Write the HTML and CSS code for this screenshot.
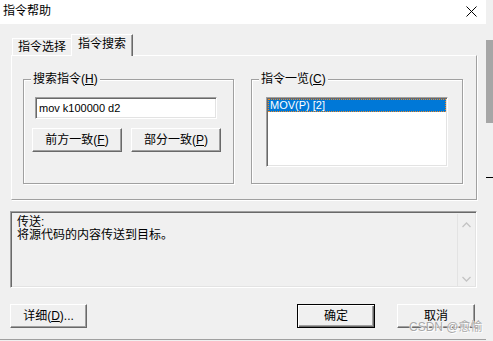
FILE: index.html
```html
<!DOCTYPE html>
<html lang="zh-CN">
<head>
    <meta charset="UTF-8">
    <title>指令帮助</title>
    <link rel="stylesheet" href="styles.css">
</head>
<body>
    <div class="dialog">
        <div class="titlebar">
            <span class="title">指令帮助</span>
            <svg class="close" width="11" height="11" viewBox="0 0 11 11">
                <path d="M0.5 0.5 L10.5 10.5 M10.5 0.5 L0.5 10.5" stroke="#000" stroke-width="1"/>
            </svg>
        </div>
        <div class="main">
            <div class="tabs">
                <div class="tab">指令选择</div>
                <div class="tab active">指令搜索</div>
            </div>
            <div class="panel">
                <div class="group group-search">
                    <span class="legend">搜索指令(<u>H</u>)</span>
                    <div class="edit">mov k100000 d2</div>
                    <div class="btn-row">
                        <button class="btn wide">前方一致(<u>F</u>)</button>
                        <button class="btn wide">部分一致(<u>P</u>)</button>
                    </div>
                </div>
                <div class="group group-list">
                    <span class="legend">指令一览(<u>C</u>)</span>
                    <div class="listbox">
                        <div class="item selected">MOV(P) [2]</div>
                    </div>
                </div>
            </div>
            <div class="desc">
                <div class="desc-text">传送:<br>将源代码的内容传送到目标。</div>
                <div class="vscroll">
                    <svg width="9" height="6" viewBox="0 0 9 6"><path d="M0.5 5 L4.5 1 L8.5 5" fill="none" stroke="#c4c4c4" stroke-width="1.3"/></svg>
                    <svg width="9" height="6" viewBox="0 0 9 6"><path d="M0.5 1 L4.5 5 L8.5 1" fill="none" stroke="#c4c4c4" stroke-width="1.3"/></svg>
                </div>
            </div>
            <div class="footer">
                <button class="btn detail">详细(<u>D</u>)...</button>
                <div class="footer-right">
                    <button class="btn ok">确定</button>
                    <button class="btn">取消</button>
                </div>
            </div>
        </div>
        <div class="watermark">CSDN @愈愉</div>
    </div>
    <div class="side">
        <div class="side-thumb"></div>
        <div class="side-rule"></div>
    </div>
</body>
</html>
```

FILE: styles.css
```css
body {
    margin: 0;
    display: flex;
    background: #f0f0f0;
    font-family: "Liberation Sans", "Noto Sans CJK SC", sans-serif;
    font-size: 12px;
    color: #000;
}
u {
    text-decoration: underline;
}
.dialog {
    width: 486px;
    height: 339px;
    background: #f0f0f0;
    border-bottom: 1px solid #a0a0a0;
    position: relative;
}
.titlebar {
    height: 24px;
    background: #fff;
    display: flex;
    justify-content: space-between;
    align-items: center;
    padding: 0 9px 0 3px;
}
.title {
    line-height: 22px;
    margin-top: -2px;
}
.close {
    margin-top: -1px;
}
.main {
    padding: 0 10px;
}
.tabs {
    display: flex;
    align-items: flex-end;
    margin-top: 11px;
    padding-left: 2px;
    height: 21px;
    margin-bottom: -1px;
    position: relative;
    z-index: 1;
}
.tab {
    width: 58px;
    height: 16px;
    line-height: 16px;
    text-align: center;
    border-top: 1px solid #fff;
    border-left: 1px solid #fff;
    margin-bottom: 1px;
}
.tab.active {
    width: 60px;
    height: 21px;
    line-height: 19px;
    margin-bottom: 0;
    background: #f0f0f0;
    border-right: 1px solid #696969;
    box-shadow: inset -1px 0 0 #a0a0a0;
}
.panel {
    margin-left: 1px;
    border-top: 1px solid #fff;
    border-left: 1px solid #fff;
    border-right: 1px solid #a0a0a0;
    border-bottom: 1px solid #a0a0a0;
    box-shadow: 1px 1px 0 #fff;
    padding: 23px 0 0 11px;
    display: flex;
    gap: 17px;
    box-sizing: border-box;
    width: 466px;
    height: 145px;
}
.group {
    position: relative;
    height: 105px;
    box-sizing: border-box;
    border: 1px solid #a0a0a0;
    box-shadow: inset 1px 1px 0 #fff, 1px 1px 0 #fff;
}
.group-search {
    width: 211px;
    padding: 17px 0 0 11px;
}
.group-list {
    width: 212px;
    padding: 17px 0 0 14px;
}
.legend {
    position: absolute;
    top: -8px;
    left: 7px;
    padding: 0 2px;
    background: #f0f0f0;
    line-height: 15px;
}
.edit {
    width: 182px;
    height: 22px;
    box-sizing: border-box;
    background: #fff;
    border: 1px solid;
    border-color: #a0a0a0 #fff #fff #a0a0a0;
    box-shadow: inset 1px 1px 0 #696969, inset -1px -1px 0 #e3e3e3;
    padding: 2px 0 0 3px;
    font-size: 11px;
    line-height: 16px;
}
.btn-row {
    display: flex;
    gap: 9px;
    margin: 9px 0 0 -3px;
}
.btn {
    font-family: inherit;
    font-size: 12px;
    height: 24px;
    width: 78px;
    padding: 0;
    background: #f0f0f0;
    color: #000;
    border: 1px solid;
    border-color: #fff #696969 #696969 #fff;
    box-shadow: inset -1px -1px 0 #a0a0a0;
    line-height: 20px;
}
.btn.wide {
    width: 90px;
}
.listbox {
    width: 182px;
    height: 70px;
    box-sizing: border-box;
    background: #fff;
    border: 1px solid;
    border-color: #a0a0a0 #fff #fff #a0a0a0;
    box-shadow: inset 1px 1px 0 #696969, inset -1px -1px 0 #e3e3e3;
    padding: 1px 1px 0 1px;
}
.item {
    height: 13px;
    line-height: 13px;
    font-size: 11px;
    padding-left: 2px;
}
.item.selected {
    background: #0078d7;
    color: #fff;
    outline: 1px dotted #f08a24;
    outline-offset: -1px;
}
.desc {
    margin-top: 11px;
    width: 467px;
    height: 77px;
    box-sizing: border-box;
    border: 1px solid;
    border-color: #a0a0a0 #fff #fff #a0a0a0;
    box-shadow: inset 1px 1px 0 #696969, inset -1px -1px 0 #e3e3e3;
    display: flex;
    justify-content: space-between;
}
.desc-text {
    padding: 4px 0 0 6px;
    line-height: 13px;
}
.vscroll {
    width: 17px;
    margin: 2px 1px 1px 0;
    border-left: 1px solid #e3e3e3;
    display: flex;
    flex-direction: column;
    justify-content: space-between;
    align-items: center;
    padding: 8px 0 4px;
}
.footer {
    margin-top: 16px;
    display: flex;
    justify-content: space-between;
    padding-right: 1px;
}
.btn.detail {
    width: 77px;
}
.footer-right {
    display: flex;
    gap: 22px;
}
.btn.ok {
    border: 1px solid #000;
    box-shadow: inset 1px 1px 0 #fff, inset -1px -1px 0 #696969, inset -2px -2px 0 #a0a0a0;
}
.watermark {
    position: absolute;
    left: 409px;
    top: 320px;
    white-space: nowrap;
    font-size: 12px;
    line-height: 14px;
    color: #a8a8a8;
    text-shadow: 0 0 1px #fff, 1px 1px 0 #fff;
}
.side {
    width: 7px;
}
.side-thumb {
    margin-top: 40px;
    height: 83px;
    background: #a6a6a6;
}
.side-rule {
    margin-top: 54px;
    height: 1px;
    background: #000;
}
```
